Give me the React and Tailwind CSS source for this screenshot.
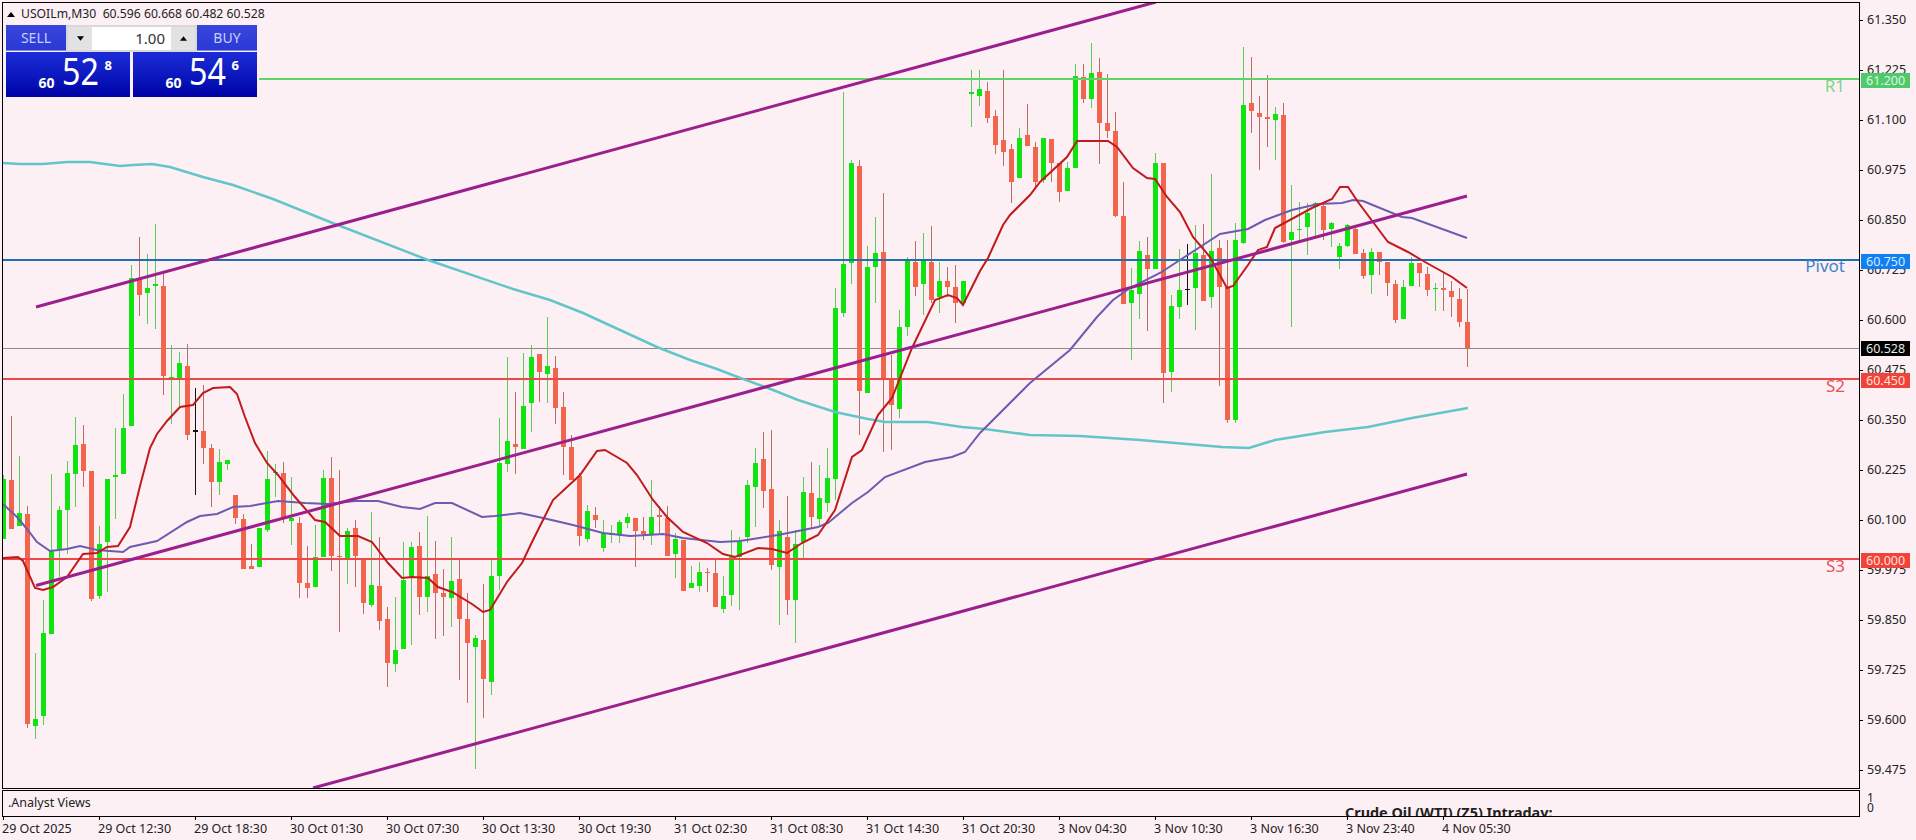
// candles were read off in zoomed crops, so each batch keeps its own y origin and scale
// row = [colour, high, body top, body bottom, low]
const batches = [
  { y0: 210, s: 2.903, rows: [
    ['g', 770, 780, 955, 955], ['r', 597, 785, 925, 925], ['g', 715, 880, 918, 918], ['r', 858, 882, 1492, 1505],
    ['g', 1285, 1478, 1498, 1535], ['g', 1133, 1228, 1468, 1495], ['g', 765, 990, 1230, 1230], ['g', 858, 870, 985, 1065],
    ['g', 728, 763, 870, 1000], ['g', 600, 682, 767, 862], ['r', 625, 680, 757, 805], ['r', 758, 758, 1128, 1135],
    ['g', 918, 970, 1120, 1130], ['g', 780, 780, 963, 1108], ['g', 632, 770, 774, 898], ['g', 533, 633, 765, 765],
    ['g', 160, 198, 627, 627], ['r', 78, 200, 247, 308], ['g', 128, 226, 240, 332], ['g', 42, 215, 222, 345],
    ['r', 180, 220, 482, 537], ['g', 392, 484, 490, 620], ['g', 412, 443, 488, 570], ['r', 388, 453, 653, 668],
    ['k', 517, 640, 644, 828], ['r', 508, 642, 690, 738], ['r', 678, 690, 790, 862], ['g', 695, 732, 790, 828],
    ['g', 725, 725, 738, 755], ['r', 828, 828, 895, 912], ['r', 882, 898, 1043, 1043],
  ] },
  { y0: 300, s: 3, rows: [
    ['r', 732, 797, 807, 807], ['g', 685, 685, 800, 800], ['g', 452, 537, 690, 697], ['g', 492, 515, 520, 590],
    ['r', 485, 520, 650, 670], ['g', 530, 655, 662, 735], ['r', 650, 670, 848, 895], ['r', 738, 850, 865, 895],
    ['g', 675, 770, 860, 860], ['g', 510, 535, 770, 770], ['r', 470, 535, 768, 812], ['r', 510, 768, 772, 995],
    ['g', 685, 692, 775, 852], ['r', 660, 685, 768, 862], ['r', 775, 775, 910, 942], ['g', 635, 855, 915, 920],
    ['r', 710, 858, 962, 990], ['r', 922, 958, 1090, 1162], ['g', 892, 1050, 1092, 1115], ['g', 725, 840, 1047, 1047],
    ['g', 725, 740, 830, 1035], ['r', 695, 738, 890, 945], ['g', 648, 828, 890, 935], ['r', 722, 822, 878, 1018],
    ['r', 808, 880, 892, 1008], ['g', 712, 842, 895, 980], ['r', 778, 838, 956, 1140], ['r', 878, 958, 1030, 1210],
    ['g', 1005, 1015, 1042, 1408], ['r', 852, 1020, 1138, 1255], ['g', 780, 828, 1145, 1185],
    ['g', 355, 490, 828, 870], ['g', 172, 423, 493, 515], ['r', 275, 433, 440, 522], ['g', 160, 318, 447, 447],
    ['g', 135, 172, 308, 395], ['r', 162, 162, 215, 305], ['g', 52, 198, 222, 310], ['r', 168, 205, 325, 372],
    ['r', 275, 322, 440, 525], ['r', 405, 442, 540, 540], ['r', 520, 528, 707, 738], ['g', 615, 633, 717, 727],
    ['r', 620, 646, 660, 685], ['g', 660, 700, 745, 755], ['g', 675, 700, 706, 730], ['g', 660, 667, 702, 728],
    ['g', 640, 652, 670, 685], ['r', 655, 655, 692, 802], ['r', 650, 693, 702, 720], ['g', 540, 650, 705, 735],
    ['r', 618, 645, 652, 700], ['r', 618, 655, 768, 768], ['g', 700, 718, 762, 835], ['r', 720, 720, 873, 873],
    ['g', 798, 850, 865, 865], ['g', 785, 815, 858, 875], ['r', 805, 816, 820, 875], ['r', 780, 820, 920, 920],
    ['g', 828, 888, 928, 940], ['g', 690, 770, 885, 918], ['g', 710, 725, 770, 930],
  ] },
  { y0: 80, s: 3, rows: [
    ['g', 1200, 1215, 1370, 1390], ['g', 1105, 1150, 1222, 1340], ['r', 1055, 1137, 1232, 1285], ['r', 1050, 1228, 1455, 1470],
    ['g', 1320, 1352, 1460, 1635], ['r', 1248, 1370, 1560, 1605], ['g', 1350, 1392, 1560, 1689], ['g', 1190, 1235, 1385, 1440],
    ['r', 1145, 1240, 1310, 1345], ['g', 1155, 1255, 1318, 1335], ['g', 1105, 1195, 1270, 1295], ['g', 625, 685, 1198, 1260],
    ['g', 35, 553, 698, 710], ['g', 240, 248, 550, 612], ['r', 240, 258, 932, 1065], ['g', 498, 562, 940, 940],
    ['g', 410, 518, 560, 670], ['r', 340, 515, 895, 1115], ['r', 825, 895, 975, 1110], ['g', 690, 740, 988, 1015],
    ['g', 530, 540, 742, 768], ['r', 483, 547, 620, 648], ['g', 458, 542, 612, 705], ['r', 437, 547, 660, 670],
    ['g', 545, 602, 650, 700], ['r', 560, 602, 622, 650], ['r', 555, 622, 670, 730], ['g', 603, 603, 670, 675],
    ['g', -30, 37, 42, 142],
  ] },
  { y0: 40, s: 3, rows: [
    ['g', 90, 148, 167, 198], ['r', 125, 153, 233, 250], ['r', 210, 228, 315, 342], ['r', 90, 300, 335, 378],
    ['r', 312, 327, 425, 490], ['g', 265, 295, 415, 415], ['r', 192, 286, 318, 318], ['r', 305, 322, 425, 445],
    ['g', 295, 295, 420, 430], ['r', 298, 298, 368, 425], ['r', 368, 368, 455, 485], ['g', 365, 385, 453, 453],
    ['g', 72, 108, 385, 385], ['r', 72, 110, 178, 190], ['g', 10, 98, 178, 205], ['r', 55, 95, 248, 372],
    ['r', 102, 250, 272, 295], ['r', 215, 273, 528, 532], ['r', 425, 528, 792, 792], ['g', 685, 750, 790, 960],
    ['g', 602, 632, 762, 838], ['r', 590, 645, 688, 872], ['g', 340, 370, 688, 688], ['r', 368, 368, 998, 1088],
    ['g', 765, 798, 995, 1055], ['g', 628, 750, 800, 838], ['k', 612, 746, 750, 795], ['g', 555, 638, 745, 870],
    ['r', 552, 645, 782, 782], ['g', 402, 632, 772, 805], ['r', 600, 625, 742, 1038],
    ['r', 600, 740, 1140, 1150], ['g', 548, 600, 1140, 1150], ['g', 22, 195, 610, 612], ['r', 50, 190, 212, 280],
    ['r', 168, 220, 230, 390], ['r', 105, 231, 236, 320], ['g', 200, 222, 240, 360], ['r', 190, 225, 605, 610],
    ['g', 435, 575, 600, 862], ['g', 487, 566, 570, 600], ['g', 490, 520, 562, 645], ['g', 487, 490, 500, 590],
    ['r', 490, 497, 570, 600], ['g', 545, 548, 567, 622], ['g', 608, 618, 650, 688], ['g', 553, 555, 618, 622],
    ['r', 563, 567, 643, 643], ['r', 628, 640, 708, 718], ['g', 625, 637, 705, 762], ['r', 637, 637, 665, 705],
    ['r', 667, 667, 730, 768], ['r', 720, 733, 840, 850], ['g', 720, 740, 838, 838], ['g', 650, 670, 737, 737],
    ['r', 670, 670, 700, 740], ['r', 680, 702, 750, 768], ['g', 730, 743, 747, 812], ['r', 700, 745, 751, 812],
    ['r', 722, 752, 772, 832], ['r', 745, 778, 845, 862], ['r', 748, 845, 925, 982],
  ] },
];

const candles = batches.flatMap((b) =>
  b.rows.map(([c, h, t, bot, l]) => ({
    c,
    h: b.y0 + h / b.s,
    t: b.y0 + t / b.s,
    b: b.y0 + bot / b.s,
    l: b.y0 + l / b.s,
  }))
);

const candleColors = {
  g: { body: '#0ee40e', wick: '#58cb58' },
  r: { body: '#f2654c', wick: '#bd6f5f' },
  k: { body: '#111111', wick: '#111111' },
};

const slowMa = '3,163 20,164 43,164 67,162 90,162 120,166 133,165 152,164 170,167 203,177 233,185 273,199 330,222 428,260 513,289 550,300 583,313 620,330 657,347 690,360 717,369 735,376 768,388 798,400 835,412 868,419 885,422 928,422 962,427 985,429 1030,435 1080,436 1140,440 1222,447 1249,448 1275,440 1325,432 1368,427 1412,418 1468,408';
const midMa = '3,504 17,517 27,529 37,542 50,551 67,549 80,546 97,550 123,552 130,547 157,541 187,522 200,516 217,514 233,507 250,506 278,501 305,503 328,504 355,501 378,501 402,507 420,509 435,503 452,503 482,517 495,516 520,513 543,518 573,525 603,533 630,536 663,534 683,538 720,542 740,541 778,535 818,527 828,523 852,503 868,492 885,477 925,462 952,457 965,452 980,433 1030,383 1070,350 1097,317 1113,300 1130,288 1160,273 1180,260 1200,247 1220,234 1248,229 1265,220 1292,210 1318,204 1342,203 1353,200 1363,201 1402,217 1412,218 1467,238';
const fastMa = '3,558 18,557 23,561 35,588 43,590 53,587 67,577 83,554 97,553 107,547 118,546 130,527 140,486 150,448 157,434 167,421 180,407 193,405 203,393 213,388 230,387 237,394 245,417 255,443 267,463 278,475 295,497 315,520 325,522 340,536 358,536 372,542 388,563 402,578 412,577 428,578 438,587 452,592 472,604 483,612 490,610 507,582 522,563 533,540 553,500 580,475 597,451 605,450 627,463 637,475 653,500 667,517 683,532 707,543 723,554 735,557 758,548 772,549 787,553 802,543 818,535 835,510 852,457 862,450 878,415 892,398 912,348 935,300 948,295 957,298 963,305 972,287 980,271 988,258 1003,225 1010,215 1030,195 1040,182 1067,157 1077,141 1108,141 1117,147 1133,168 1147,178 1155,179 1167,197 1180,212 1193,237 1210,257 1227,288 1233,286 1248,265 1258,250 1267,247 1275,228 1312,208 1332,199 1340,187 1348,187 1358,202 1388,242 1408,252 1425,262 1452,277 1467,288';

const priceTicks = ['61.350', '61.225', '61.100', '60.975', '60.850', '60.725', '60.600', '60.475', '60.350', '60.225', '60.100', '59.975', '59.850', '59.725', '59.600', '59.475'];
const timeLabels = ['29 Oct 2025', '29 Oct 12:30', '29 Oct 18:30', '30 Oct 01:30', '30 Oct 07:30', '30 Oct 13:30', '30 Oct 19:30', '31 Oct 02:30', '31 Oct 08:30', '31 Oct 14:30', '31 Oct 20:30', '3 Nov 04:30', '3 Nov 10:30', '3 Nov 16:30', '3 Nov 23:40', '4 Nov 05:30'];

const levels = [
  { y: 79, x1: 259, color: '#5fd268' },
  { y: 260, x1: 2, color: '#1f6fae' },
  { y: 379, x1: 2, color: '#ea4a4a' },
  { y: 559, x1: 2, color: '#ea4a4a' },
];

const levelNames = [
  { name: 'R1', y: 91.5, color: '#7ed68c' },
  { name: 'Pivot', y: 271.5, color: '#3b84cc' },
  { name: 'S2', y: 392, color: '#e25555' },
  { name: 'S3', y: 572, color: '#e25555' },
];

const channels = ['36,307 1156,2', '36,585.5 1467,196', '313,788 1467,474'];

function Chart() {
  return (
    <svg viewBox="3 3 1856 785" className="block w-full h-full">
      <line x1="3" x2="1859" y1="348.5" y2="348.5" stroke="#8c8c8c" strokeWidth="1" />
      {candles.map((k, i) => (
        <g key={i} shapeRendering="crispEdges">
          <rect x={3 + 8 * i} y={k.h} width="1" height={Math.max(k.l - k.h, 1)} fill={candleColors[k.c].wick} />
          <rect x={1 + 8 * i} y={k.t} width="5" height={Math.max(k.b - k.t, 1)} fill={candleColors[k.c].body} />
        </g>
      ))}
      {levels.map((l) => (
        <line key={l.y} x1={l.x1} x2="1859" y1={l.y} y2={l.y} stroke={l.color} strokeWidth="2" />
      ))}
      <polyline points={slowMa} fill="none" stroke="#62c6c8" strokeWidth="2.5" />
      <polyline points={midMa} fill="none" stroke="#6c5cb0" strokeWidth="2" />
      <polyline points={fastMa} fill="none" stroke="#c01a1a" strokeWidth="2" />
      {channels.map((p) => (
        <polyline key={p} points={p} fill="none" stroke="#9c1f8e" strokeWidth="3" />
      ))}
      {levelNames.map((l) => (
        <text key={l.name} x="1845" y={l.y} textAnchor="end" fontSize="17" fill={l.color}>
          {l.name}
        </text>
      ))}
    </svg>
  );
}

function Triangle({ down, className }) {
  return (
    <svg viewBox="0 0 8 5" className={className}>
      <polygon points={down ? '0,0 8,0 4,5' : '4,0 8,5 0,5'} fill="#000" />
    </svg>
  );
}

function PriceBox({ big, small }) {
  return (
    <div className="flex-1 h-[45px] flex items-start justify-end pr-[18px] text-white bg-gradient-to-b from-[#1c2bd8] to-[#0000a6]">
      <span className="text-[14px] font-bold leading-none mt-[24px] mr-[7px]">60</span>
      <span className="text-[38px] leading-none -mt-[1px] w-[37px] scale-x-[0.85] origin-left whitespace-nowrap">{big}</span>
      <span className="text-[13px] font-bold leading-none mt-[7px] ml-[6px]">{small}</span>
    </div>
  );
}

function OrderPanel() {
  return (
    <div className="absolute left-[3px] top-[22px] w-[251px] flex flex-col gap-px">
      <div className="flex h-[26px]">
        <div className="w-[60px] flex items-center justify-center text-[14px] text-[#c6d0fb] bg-gradient-to-b from-[#3a46dc] to-[#2a38d6] border-b border-[#7f8ae6]">SELL</div>
        <div className="w-[131px] h-[27px] flex bg-white border-2 border-[#d8d8d8]">
          <div className="w-[24px] bg-[#e2e2e2] flex items-center justify-center">
            <Triangle down className="w-[7px] h-[5px]" />
          </div>
          <div className="flex-1 text-right pr-[6px] text-[15px] leading-[23px] text-[#333]">1.00</div>
          <div className="w-[24px] bg-[#e2e2e2] flex items-center justify-center">
            <Triangle className="w-[7px] h-[5px]" />
          </div>
        </div>
        <div className="flex-1 flex items-center justify-center text-[14px] text-[#c6d0fb] bg-gradient-to-b from-[#3a46dc] to-[#2a38d6] border-b border-[#7f8ae6]">BUY</div>
      </div>
      <div className="flex gap-[3px]">
        <PriceBox big="52" small="8" />
        <PriceBox big="54" small="6" />
      </div>
    </div>
  );
}

function PriceAxis() {
  return (
    <div className="relative flex-1 overflow-hidden">
      <div className="-mt-[7px] h-[793px] overflow-hidden">
        {priceTicks.map((p) => (
          <div key={p} className="h-[50px] flex items-center">
            <span className="w-[3px] h-px bg-black" />
            <span className="ml-[4px]">{p}</span>
          </div>
        ))}
      </div>
      <div className="flex flex-col text-[12px] leading-[10px] ml-[7px] mt-[5px]">
        <span>1</span>
        <span>0</span>
      </div>
      {/* tags sit on top of the scale */}
      <div className="absolute left-[1px] top-[71px] w-[49px] h-[15px] bg-[#4ec96c] text-[#dff7df] leading-[15px] pl-[5px]">61.200</div>
      <div className="absolute left-[1px] top-[252px] w-[49px] h-[15px] bg-[#0f7ff2] text-[#d8ecff] leading-[15px] pl-[5px]">60.750</div>
      <div className="absolute left-[1px] top-[339px] w-[49px] h-[15px] bg-black text-[#e8e8e8] leading-[15px] pl-[5px]">60.528</div>
      <div className="absolute left-[1px] top-[371px] w-[49px] h-[15px] bg-[#f0443a] text-[#ffe0dc] leading-[15px] pl-[5px]">60.450</div>
      <div className="absolute left-[1px] top-[551px] w-[49px] h-[15px] bg-[#f0443a] text-[#ffe0dc] leading-[15px] pl-[5px]">60.000</div>
    </div>
  );
}

export default function App() {
  return (
    <div className="h-[840px] w-full overflow-hidden flex pt-[2px] pl-[2px] text-[12.5px] text-[#222] font-['Noto_Sans',sans-serif] bg-[#fdf0f5]">
      <div className="w-[1858px] flex flex-col">
        <div className="relative h-[787px] border border-black">
          <Chart />
          <div className="absolute left-[4px] top-[2px] flex items-center text-[12.2px] text-[#222]">
            <Triangle className="w-[8px] h-[5px] mr-[6px]" />
            <span className="whitespace-pre">USOILm,M30  60.596 60.668 60.482 60.528</span>
          </div>
          <OrderPanel />
        </div>
        <div className="relative h-[27px] mt-px border border-black overflow-hidden">
          <span className="absolute left-[5px] top-[3px]">.Analyst Views</span>
          <span className="absolute left-[1342px] top-[15px] text-[14.4px] font-bold leading-none whitespace-nowrap">Crude Oil (WTI) (Z5) Intraday:</span>
        </div>
        <div className="flex">
          {timeLabels.map((t) => (
            <div key={t} className="w-[96px] shrink-0">
              <div className="w-px h-[3px] bg-black ml-[1px]" />
              <div className="leading-[16px] whitespace-nowrap mt-px">{t}</div>
            </div>
          ))}
        </div>
      </div>
      <PriceAxis />
    </div>
  );
}
